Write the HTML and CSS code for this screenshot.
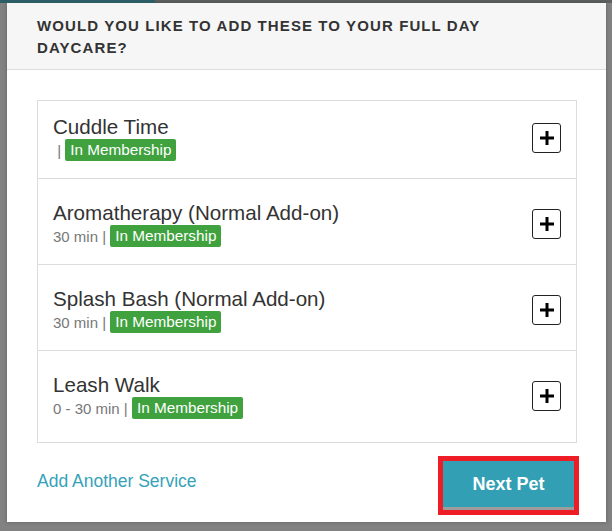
FILE: index.html
```html
<!DOCTYPE html>
<html lang="en">
<head>
<meta charset="utf-8">
<title>Add-ons</title>
<link rel="stylesheet" href="styles.css">
</head>
<body>
<div class="topbar"><span class="topbar-teal"></span></div>
<div class="modal">
  <div class="modal-header">WOULD YOU LIKE TO ADD THESE TO YOUR FULL DAY DAYCARE?</div>
  <div class="modal-body">
    <ul class="service-list">
      <li class="service">
        <div class="service-info">
          <div class="service-name">Cuddle Time</div>
          <div class="service-meta"> | <span class="badge">In Membership</span></div>
        </div>
        <button class="add-btn" aria-label="Add"><svg width="14" height="14" viewBox="0 0 14 14"><path d="M7 0V14M0 7H14" stroke="#000" stroke-width="3" fill="none"/></svg></button>
      </li>
      <li class="service">
        <div class="service-info">
          <div class="service-name">Aromatherapy (Normal Add-on)</div>
          <div class="service-meta">30 min | <span class="badge">In Membership</span></div>
        </div>
        <button class="add-btn" aria-label="Add"><svg width="14" height="14" viewBox="0 0 14 14"><path d="M7 0V14M0 7H14" stroke="#000" stroke-width="3" fill="none"/></svg></button>
      </li>
      <li class="service">
        <div class="service-info">
          <div class="service-name">Splash Bash (Normal Add-on)</div>
          <div class="service-meta">30 min | <span class="badge">In Membership</span></div>
        </div>
        <button class="add-btn" aria-label="Add"><svg width="14" height="14" viewBox="0 0 14 14"><path d="M7 0V14M0 7H14" stroke="#000" stroke-width="3" fill="none"/></svg></button>
      </li>
      <li class="service">
        <div class="service-info">
          <div class="service-name">Leash Walk</div>
          <div class="service-meta">0 - 30 min | <span class="badge">In Membership</span></div>
        </div>
        <button class="add-btn" aria-label="Add"><svg width="14" height="14" viewBox="0 0 14 14"><path d="M7 0V14M0 7H14" stroke="#000" stroke-width="3" fill="none"/></svg></button>
      </li>
    </ul>
  </div>
  <div class="modal-footer">
    <a class="add-link" href="#">Add Another Service</a>
    <span class="highlight"><button class="next-btn">Next Pet</button></span>
  </div>
</div>
</body>
</html>
```

FILE: styles.css
```css
* { box-sizing: border-box; }
html, body { margin: 0; padding: 0; }
body {
  background: #828282;
  font-family: "Liberation Sans", Arial, sans-serif;
  height: 531px;
  overflow: hidden;
}
.topbar {
  height: 3px;
  background: #5f6161;
  display: flex;
}
.topbar-teal {
  width: 155px;
  background: #2d5e66;
}
.modal {
  margin-left: 7px;
  width: 599px;
  height: 519px;
  background: #fff;
  box-shadow: 0 0 4px rgba(0,0,0,0.25);
}
.modal-header {
  background: #f6f6f6;
  border-bottom: 1px solid #dcdcdc;
  padding: 12px 80px 10px 30px;
  font-size: 15px;
  line-height: 22px;
  font-weight: bold;
  letter-spacing: 1.1px;
  color: #333;
}
.modal-body {
  padding: 30px 29px 0 30px;
}
.service-list {
  list-style: none;
  margin: 0;
  padding: 0;
  border: 1px solid #dcdcdc;
}
.service {
  display: flex;
  align-items: center;
  justify-content: space-between;
  padding: 22px 15px 17px 15px;
  border-top: 1px solid #dcdcdc;
}
.service:first-child {
  border-top: 0;
  padding-top: 14px;
}
.service:last-child {
  padding-bottom: 23px;
}
.service-name {
  font-size: 20.6px;
  line-height: 24px;
  color: #333;
}
.service-meta {
  display: flex;
  align-items: center;
  height: 22px;
  font-size: 15px;
  color: #777;
  white-space: pre;
}
.badge {
  display: inline-block;
  background: #3fa23f;
  color: #fff;
  font-size: 15.3px;
  line-height: 22px;
  height: 22px;
  padding: 0 5px;
  border-radius: 2px;
}
.add-btn {
  width: 29px;
  height: 30px;
  border: 1px solid #222;
  border-radius: 3px;
  background: #fff;
  padding: 0;
  display: flex;
  align-items: center;
  justify-content: center;
}
.modal-footer {
  display: flex;
  align-items: center;
  justify-content: space-between;
  padding: 13px 27px 0 30px;
}
.add-link {
  color: #35a2b8;
  font-size: 17.5px;
  text-decoration: none;
  margin-bottom: 9px;
}
.highlight {
  display: block;
  border: 5px solid #ee1c24;
}
.next-btn {
  display: block;
  width: 131px;
  height: 49px;
  background: #329fb5;
  border: 0;
  border-bottom: 3px solid #9c9c9c;
  color: #fff;
  font-family: "Liberation Sans", Arial, sans-serif;
  font-size: 18px;
  font-weight: bold;
  padding: 0;
}
```
